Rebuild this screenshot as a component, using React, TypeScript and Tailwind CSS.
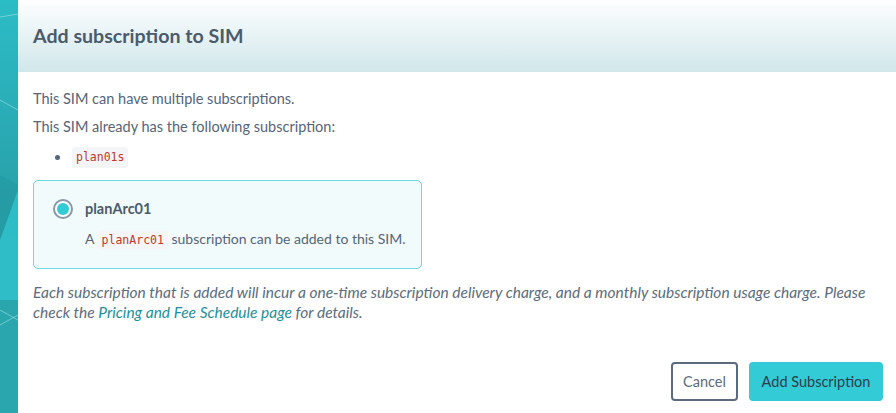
import React from 'react'

function SideStrip() {
  return (
    <div className="relative w-[18px] shrink-0 overflow-hidden bg-gradient-to-b from-[#2cbcc6] via-[#28a0a9] to-[#2aa3ab]">
      <svg className="absolute inset-0 h-full w-full" viewBox="0 0 18 413" preserveAspectRatio="none">
        <polygon points="0,175 18,185 18,235 0,240" fill="#249aa3" opacity="0.7" />
        <polygon points="0,240 18,190 18,300 0,300" fill="#31c6cf" opacity="0.8" />
        <polygon points="0,300 18,300 18,413 0,413" fill="#2aa9b1" opacity="0.6" />
        <line x1="0" y1="17" x2="18" y2="14" stroke="#9fe3e8" strokeWidth="0.6" />
        <line x1="0" y1="100" x2="18" y2="110" stroke="#9fe3e8" strokeWidth="0.6" />
        <line x1="0" y1="310" x2="18" y2="320" stroke="#9fe3e8" strokeWidth="0.6" />
        <line x1="0" y1="325" x2="18" y2="315" stroke="#9fe3e8" strokeWidth="0.6" />
      </svg>
    </div>
  )
}

function Code({ children }: { children: React.ReactNode }) {
  return (
    <code className="rounded-[3px] bg-[#f4f5f6] px-[4px] py-[2px] font-['DejaVu_Sans_Mono',monospace] text-[11.5px] text-[#c0392b]">
      {children}
    </code>
  )
}

export default function App() {
  return (
    <div className="flex h-[413px] w-[896px] bg-white font-['Lato',sans-serif] text-[#566577]">
      <SideStrip />
      <div className="flex flex-1 flex-col">
        <div className="flex h-[72px] items-center bg-gradient-to-b from-[#fdfeff] to-[#d1e7ea] px-[15px]">
          <h1 className="text-[19.6px] font-bold text-[#4b5b6d]">Add subscription to SIM</h1>
        </div>
        <div className="flex flex-1 flex-col pl-[15px] pr-[13px] pt-[17px] text-[14.5px]">
          <p className="leading-[20px]">This SIM can have multiple subscriptions.</p>
          <p className="mt-[8px] leading-[20px]">This SIM already has the following subscription:</p>
          <ul className="mt-[10px] flex items-center pl-[22px]">
            <li className="flex items-center">
              <span className="mr-[12px] h-[5px] w-[5px] rounded-full bg-[#566577]" />
              <Code>plan01s</Code>
            </li>
          </ul>
          <div className="mt-[12px] flex h-[89px] w-[389px] flex-col rounded-[5px] border border-[#6cd8e0] bg-[#f2fbfc] pl-[19px] pt-[17px]">
            <div className="flex items-center">
              <span className="flex h-[20px] w-[20px] items-center justify-center rounded-full border-2 border-[#8797a6] bg-white">
                <span className="h-[12px] w-[12px] rounded-full bg-[#33cbd6]" />
              </span>
              <span className="ml-[12px] font-bold text-[#4b5b6d]">planArc01</span>
            </div>
            <p className="ml-[32px] mt-[8px] text-[14px]">
              A <Code>planArc01</Code> subscription can be added to this SIM.
            </p>
          </div>
          <p className="mt-[13px] max-w-[840px] text-[15.5px] italic leading-[20px] text-[#5d6c7c]">
            Each subscription that is added will incur a one-time subscription delivery charge, and a monthly subscription usage charge. Please check the{' '}
            <span className="text-[#1f8f98]">Pricing and Fee Schedule page</span> for details.
          </p>
          <div className="mt-auto mb-[12px] flex justify-end gap-[11px]">
            <button className="h-[39px] w-[67px] rounded-[4px] border-2 border-[#5b6b7d] bg-white text-[14.5px] text-[#5d6c7c]">
              Cancel
            </button>
            <button className="h-[39px] w-[134px] rounded-[4px] bg-[#33cbd6] text-[14.5px] text-[#2d3d4d]">
              Add Subscription
            </button>
          </div>
        </div>
      </div>
    </div>
  )
}
